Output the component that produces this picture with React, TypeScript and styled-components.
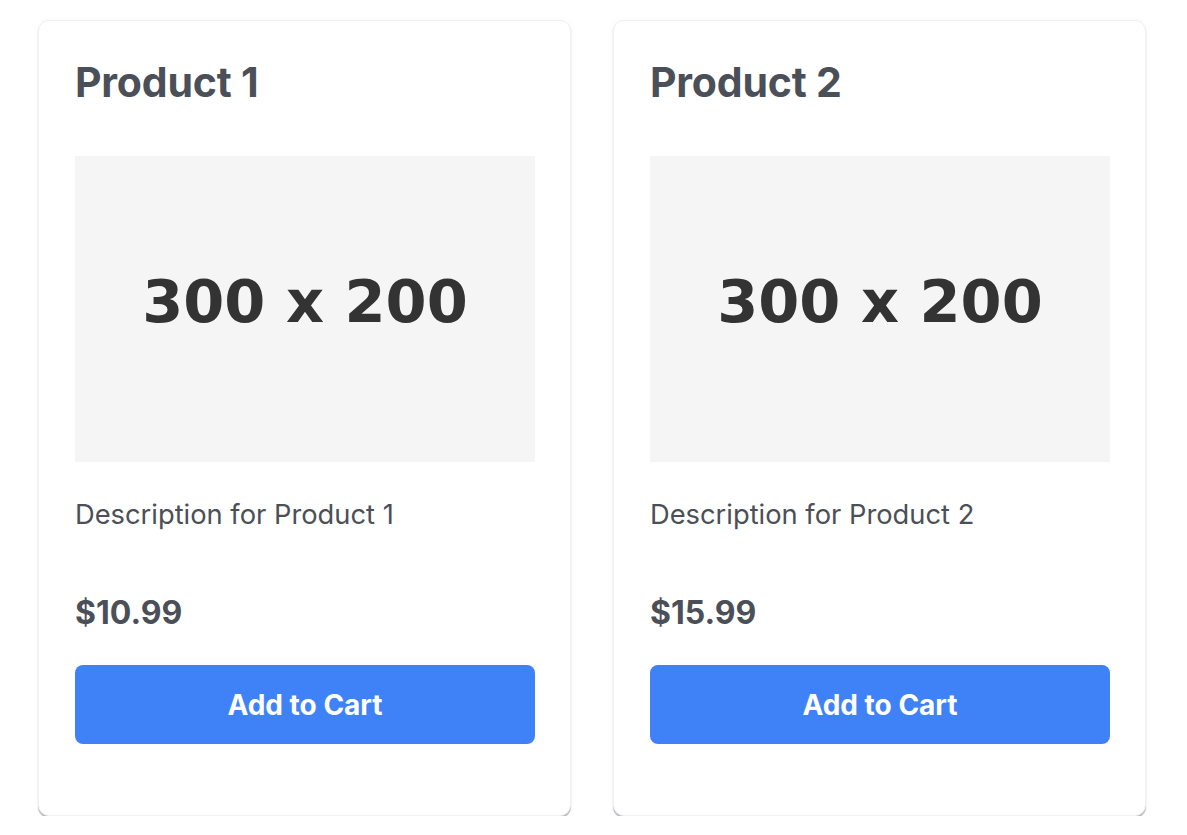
import React from "react";
import styled, { createGlobalStyle } from "styled-components";

const Global = createGlobalStyle`
  html, body { margin: 0; padding: 0; background: #ffffff; }
  body { font-family: Inter, "Noto Sans", "Liberation Sans", sans-serif; }
  * { box-sizing: border-box; }
`;

const Grid = styled.div`
  display: grid;
  grid-template-columns: 533px 533px;
  column-gap: 42px;
  padding: 20px 0 0 38px;
`;

const Card = styled.div`
  height: 796px;
  background: #fff;
  border: 1px solid #f1f1f3;
  border-radius: 11px;
  box-shadow: 0 2px 1px rgba(60, 66, 80, 0.35), 0 0 4px rgba(0, 0, 0, 0.04);
  padding: 36px 35px 36px 36px;
  display: flex;
  flex-direction: column;
`;

const Title = styled.h2`
  margin: 0;
  font-size: 41px;
  line-height: 51px;
  font-weight: 700;
  color: #4b5058;
  letter-spacing: -0.2px;
`;

const Placeholder = styled.div`
  margin-top: 48px;
  height: 306px;
  padding-bottom: 16px;
  background: #f5f5f5;
  display: flex;
  align-items: center;
  justify-content: center;
  font-family: "DejaVu Sans", sans-serif;
  font-weight: 700;
  font-size: 59px;
  color: #333333;
`;

const Description = styled.p`
  margin: 36px 0 0;
  font-size: 27.3px;
  line-height: 34px;
  color: #4b5058;
`;

const Price = styled.p`
  margin: 62px 0 0;
  font-size: 32px;
  line-height: 37px;
  font-weight: 700;
  color: #4b5058;
`;

const Button = styled.button`
  margin-top: 34px;
  height: 79px;
  width: 100%;
  border: none;
  border-radius: 8px;
  background: #3f82f7;
  color: #fff;
  font-family: Inter, "Noto Sans", sans-serif;
  font-weight: 700;
  font-size: 28px;
  cursor: pointer;
`;

const products = [
  { name: "Product 1", price: "$10.99" },
  { name: "Product 2", price: "$15.99" },
];

export default function App() {
  return (
    <>
      <Global />
      <Grid>
        {products.map((p) => (
          <Card key={p.name}>
            <Title>{p.name}</Title>
            <Placeholder>300 x 200</Placeholder>
            <Description>Description for {p.name}</Description>
            <Price>{p.price}</Price>
            <Button>Add to Cart</Button>
          </Card>
        ))}
      </Grid>
    </>
  );
}
